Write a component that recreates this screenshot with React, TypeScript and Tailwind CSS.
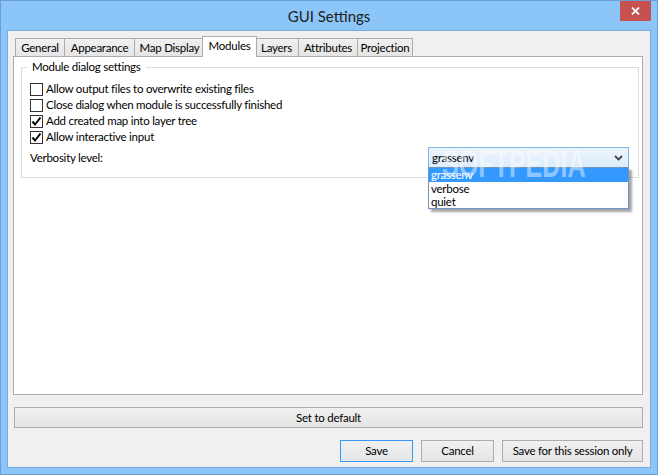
import React from "react";

const font = { fontFamily: 'Lato, "Noto Sans", Arial, sans-serif' };

function Check({ checked }: { checked: boolean }) {
  return (
    <span className="w-[13px] h-[13px] border border-[#333333] bg-white flex items-center justify-center shrink-0">
      {checked && (
        <svg width="11" height="11" viewBox="0 0 11 11">
          <path d="M1.5 5.5 L4 8.5 L9.5 1.5" fill="none" stroke="#000" strokeWidth="2" />
        </svg>
      )}
    </span>
  );
}

function Row({ checked, label }: { checked: boolean; label: string }) {
  return (
    <div className="h-[16px] flex items-center gap-[3px] whitespace-nowrap">
      <Check checked={checked} />
      <span className="leading-[16px]">{label}</span>
    </div>
  );
}

type Tab = { label: string; w: string; ml: string; sel?: boolean };

const tabs: Tab[] = [
  { label: "General", w: "w-[50px]", ml: "ml-0" },
  { label: "Appearance", w: "w-[71px]", ml: "-ml-px" },
  { label: "Map Display", w: "w-[71px]", ml: "-ml-px" },
  { label: "Modules", w: "w-[55px]", ml: "-ml-[3px]", sel: true },
  { label: "Layers", w: "w-[45px]", ml: "-ml-[3px]" },
  { label: "Attributes", w: "w-[60px]", ml: "-ml-px" },
  { label: "Projection", w: "w-[56px]", ml: "-ml-px" },
];

export default function App() {
  return (
    <div
      className="w-[658px] h-[475px] bg-[#8cc5f7] border border-[#6b9fd3] flex flex-col text-[11.5px] tracking-[-0.25px] text-black overflow-hidden"
      style={font}
    >
      {/* title bar */}
      <div className="h-[29px] flex relative">
        <div className="flex-1 flex items-center justify-center pt-[2px] text-[15px] tracking-normal text-[#1e1e1e]">
          GUI Settings
        </div>
        <div className="absolute right-[6px] top-0 w-[31px] h-[20px] bg-[#c75050] flex items-center justify-center">
          <svg width="9" height="8" viewBox="0 0 9 8">
            <path d="M1 0.5 L8 7.5 M8 0.5 L1 7.5" stroke="#fff" strokeWidth="1.8" />
          </svg>
        </div>
      </div>

      {/* content */}
      <div className="flex-1 mx-[6px] mb-[6px] border border-[#7aaad9] bg-[#f0f0f0] flex flex-col pl-[5px] pr-[7px] pt-[5px] pb-[5px]">
        {/* tabs */}
        <div className="h-[20px] flex items-end pl-[2px] relative z-10 whitespace-nowrap">
          {tabs.map((t) =>
            t.sel ? (
              <div
                key={t.label}
                className={`${t.w} ${t.ml} h-[21px] -mb-px bg-white border-t border-l border-r border-[#acacac] flex items-center justify-center pb-[2px] relative z-10`}
              >
                {t.label}
              </div>
            ) : (
              <div
                key={t.label}
                className={`${t.w} ${t.ml} h-[18px] bg-gradient-to-b from-[#f0f0f0] to-[#e5e5e5] border-t border-l border-r border-[#acacac] flex items-center justify-center`}
              >
                {t.label}
              </div>
            )
          )}
        </div>

        {/* panel */}
        <div className="h-[339px] border border-[#acacac] bg-white pl-[7px] pr-[3px] pt-[2px]">
          <fieldset className="border border-[#dcdcdc] pl-[8px] pr-[9px] pt-[6px] pb-[9px]">
            <legend className="-ml-[3px] px-[5px] leading-[16px]">Module dialog settings</legend>
            <Row checked={false} label="Allow output files to overwrite existing files" />
            <Row checked={false} label="Close dialog when module is successfully finished" />
            <Row checked={true} label="Add created map into layer tree" />
            <Row checked={true} label="Allow interactive input" />
            <div className="mt-[2px] h-[21px] flex items-center justify-between">
              <span>Verbosity level:</span>
              <div className="relative w-[201px] h-[21px]">
                <div className="w-full h-full border border-[#7eb4ea] bg-gradient-to-b from-[#ecf4fc] to-[#dcecfc] flex items-center pl-[3px] pr-[5px] justify-between">
                  <span>grassenv</span>
                  <svg width="9" height="6" viewBox="0 0 9 6">
                    <path d="M1 1 L4.5 4.5 L8 1" fill="none" stroke="#444" strokeWidth="1.8" />
                  </svg>
                </div>
                <div className="absolute left-0 top-[20px] w-[201px] h-[42px] bg-white border border-[#6f94c4] shadow-[3px_3px_2px_rgba(0,0,0,0.35)] flex flex-col z-20">
                  <div className="h-[14px] bg-[#3399ff] text-white pl-[2px] leading-[14px]">grassenv</div>
                  <div className="h-[13px] pl-[2px] leading-[13px]">verbose</div>
                  <div className="h-[13px] pl-[2px] leading-[13px]">quiet</div>
                </div>
                <div
                  className="absolute left-[14px] top-[-2px] z-30 pointer-events-none text-[38px] font-bold leading-none tracking-normal text-white/45 whitespace-nowrap origin-left scale-x-[0.66]"
                  style={{ fontFamily: 'Arial, "Liberation Sans", sans-serif' }}
                >
                  SOFTPEDIA<sup className="text-[11px] align-top">®</sup>
                </div>
              </div>
            </div>
          </fieldset>
        </div>

        {/* set to default */}
        <div className="mt-[12px] h-[21px] ml-px border border-[#acacac] bg-gradient-to-b from-[#f0f0f0] to-[#e5e5e5] flex items-center justify-center">
          Set to default
        </div>

        {/* buttons */}
        <div className="mt-[12px] h-[22px] flex justify-end gap-[8px] whitespace-nowrap">
          <div className="w-[73px] border border-[#3399ff] bg-gradient-to-b from-[#f0f0f0] to-[#e5e5e5] flex items-center justify-center">
            Save
          </div>
          <div className="w-[73px] border border-[#acacac] bg-gradient-to-b from-[#f0f0f0] to-[#e5e5e5] flex items-center justify-center">
            Cancel
          </div>
          <div className="w-[141px] border border-[#acacac] bg-gradient-to-b from-[#f0f0f0] to-[#e5e5e5] flex items-center justify-center">
            Save for this session only
          </div>
        </div>
      </div>
    </div>
  );
}
